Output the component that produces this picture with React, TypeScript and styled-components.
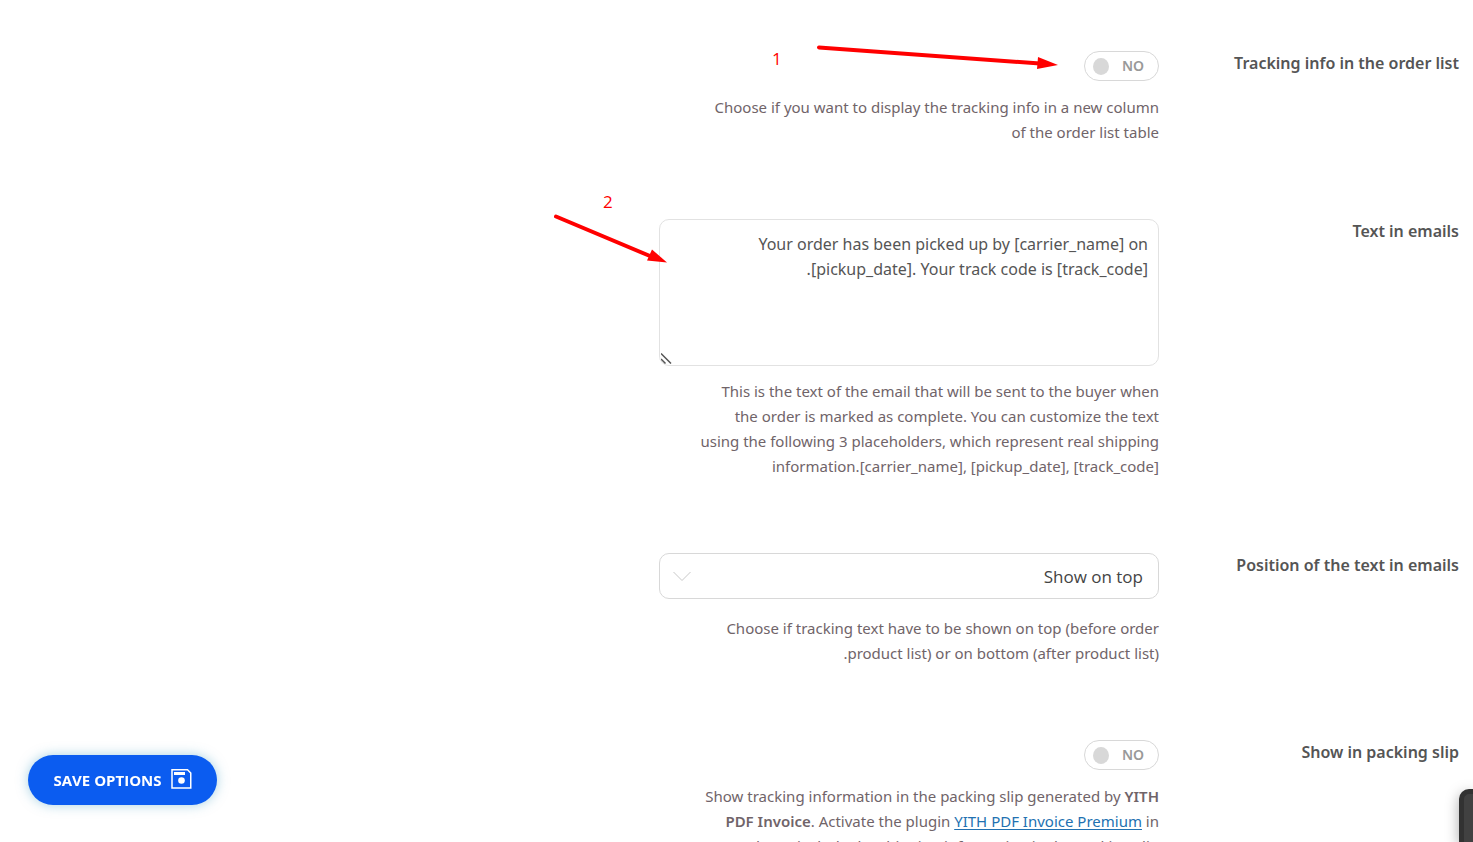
import React, { useState } from "react";
import styled, { createGlobalStyle } from "styled-components";

const GlobalStyle = createGlobalStyle`
  * { box-sizing: border-box; }
  body {
    margin: 0;
    background: #fff;
    color: #555;
    font-family: "Noto Sans", "Open Sans", sans-serif;
    font-size: 16px;
  }
`;

const Page = styled.main`
  position: relative;
  height: 100vh;
  overflow: hidden;
  padding: 51px 14px 0;
  display: flex;
  flex-direction: column;
  gap: 74px;
`;

const Row = styled.section`
  display: grid;
  grid-template-columns: 300px minmax(0, 500px);
  flex: none;
`;

const Label = styled.label`
  font-weight: 600;
  line-height: 24px;
  color: #555;
`;

const Field = styled.div`
  display: flex;
  flex-direction: column;
  align-items: flex-start;
`;

const Description = styled.p<{ $gap: number }>`
  margin: ${(p) => p.$gap}px 0 0;
  width: 100%;
  max-width: 462px;
  font-size: 15px;
  line-height: 25px;
  color: #706469;

  strong { font-weight: 600; }
`;

const Link = styled.a`
  color: #2271b1;
  text-underline-offset: 2px;
`;

const Switch = styled.button`
  display: flex;
  align-items: center;
  justify-content: space-between;
  width: 75px;
  height: 30px;
  padding: 0 14px 0 8px;
  border: 1px solid #d8d8d8;
  border-radius: 15px;
  background: #fff;
  color: #999;
  font: 600 14px/20px "Noto Sans", sans-serif;
  cursor: pointer;
`;

const Knob = styled.span`
  width: 16px;
  height: 17px;
  border-radius: 50%;
  background: #d8d8d8;
`;

const ControlBox = styled.div`
  position: relative;
  width: 100%;
`;

const TextArea = styled.textarea`
  display: block;
  width: 100%;
  height: 147px;
  padding: 12px 10px;
  border: 1px solid #e2e2e2;
  border-radius: 10px;
  background: #fff;
  color: #555;
  font: 400 16px/25px "Noto Sans", sans-serif;
  resize: vertical;

  &::-webkit-resizer { background: transparent; }
`;

const Grip = styled.svg`
  position: absolute;
  left: 2px;
  bottom: 2px;
  pointer-events: none;
`;

const Select = styled.select`
  display: block;
  appearance: none;
  width: 100%;
  height: 46px;
  padding: 0 15px;
  border: 1px solid #d8d8d8;
  border-radius: 10px;
  background: #fff;
  color: #444;
  font: 400 17px/25px "Open Sans", sans-serif;
`;

const Chevron = styled.svg`
  position: absolute;
  left: 14px;
  top: 18px;
  pointer-events: none;
`;

const SaveButton = styled.button`
  position: fixed;
  left: 28px;
  bottom: 37px;
  display: flex;
  align-items: center;
  justify-content: center;
  gap: 9px;
  width: 189px;
  height: 50px;
  border: 0;
  border-radius: 25px;
  background: #0b5cf0;
  box-shadow: 0 0 12px rgba(80, 165, 200, 0.5);
  color: #fff;
  font: 700 15px/20px "Open Sans", sans-serif;
  white-space: nowrap;
`;

const SidePanel = styled.aside`
  position: fixed;
  right: 0;
  bottom: 0;
  width: 14px;
  height: 53px;
  border: 5px solid #323232;
  border-width: 5px 0 0 5px;
  border-radius: 10px 0 0 0;
  background: #414141;
  box-shadow: 0 4px 14px rgba(0, 0, 0, 0.35);
`;

const Annotations = styled.svg`
  position: absolute;
  top: 0;
  right: 373px;
  pointer-events: none;
`;

const Callout = styled.text`
  fill: #f00;
  font: 400 17px "Open Sans", sans-serif;
`;

function Toggle({ id }: { id: string }) {
  const [on, setOn] = useState(false);
  return (
    <Switch id={id} type="button" role="switch" aria-checked={on} dir="ltr" onClick={() => setOn(!on)}>
      <Knob />
      {on ? "YES" : "NO"}
    </Switch>
  );
}

export default function App() {
  return (
    <>
      <GlobalStyle />
      <Page dir="rtl">
        <Row>
          <Label htmlFor="order-list">Tracking info in the order list</Label>
          <Field>
            <Toggle id="order-list" />
            <Description $gap={14}>
              Choose if you want to display the tracking info in a new column of the order list table
            </Description>
          </Field>
        </Row>
        <Row>
          <Label htmlFor="email-text">Text in emails</Label>
          <Field>
            <ControlBox>
              <TextArea
                id="email-text"
                spellCheck={false}
                defaultValue="Your order has been picked up by [carrier_name] on [pickup_date]. Your track code is [track_code]."
              />
              <Grip width="11" height="11" viewBox="0 0 11 11" stroke="#555" strokeWidth="1.500">
                <path d="M0 .5 10 10.500M0 6 4.500 10.500" />
              </Grip>
            </ControlBox>
            <Description $gap={13}>
              This is the text of the email that will be sent to the buyer when the order is marked as
              complete. You can customize the text using the following 3 placeholders, which represent
              real shipping information.[carrier_name], [pickup_date], [track_code]
            </Description>
          </Field>
        </Row>
        <Row>
          <Label htmlFor="email-position">Position of the text in emails</Label>
          <Field>
            <ControlBox>
              <Select id="email-position">
                <option>Show on top</option>
                <option>Show on bottom</option>
              </Select>
              <Chevron width="18" height="11" viewBox="0 0 18 11" fill="none" stroke="#c8c8c8">
                <path d="M.5 1 9 9.5 17.5 1" />
              </Chevron>
            </ControlBox>
            <Description $gap={17}>
              Choose if tracking text have to be shown on top (before order product list) or on bottom
              (after product list).
            </Description>
          </Field>
        </Row>
        <Row>
          <Label htmlFor="packing-slip">Show in packing slip</Label>
          <Field>
            <Toggle id="packing-slip" />
            <Description $gap={14}>
              Show tracking information in the packing slip generated by <strong>YITH PDF Invoice</strong>.
              Activate the plugin <Link href="#">YITH PDF Invoice Premium</Link> in order to include the
              shipping information in the packing slip
            </Description>
          </Field>
        </Row>
        <Annotations width="550" height="280" viewBox="550 0 550 280" direction="ltr">
          <g stroke="#f00" strokeWidth="4" strokeLinecap="round">
            <path d="M819 47.500 1040 63.500" />
            <path d="M556 216.500 650 256" />
          </g>
          <g fill="#f00">
            <path d="M1038 57 1058 65 1037 69Z" />
            <path d="M652 249.500 667 262.500 647 260.500Z" />
          </g>
          <Callout x="772" y="65">1</Callout>
          <Callout x="603" y="208">2</Callout>
        </Annotations>
      </Page>
      <SaveButton type="button">
        SAVE OPTIONS
        <svg width="21" height="23" viewBox="0 0 21 23" fill="none" stroke="#fff" aria-hidden="true">
          <path d="M1 .75H16.500L19.750 4V19H1Z" strokeWidth="1.500" />
          <path d="M3 3H14V6H3Z" fill="#fff" stroke="none" />
          <circle cx="10.500" cy="11.500" r="3.300" fill="#fff" stroke="none" />
        </svg>
      </SaveButton>
      <SidePanel />
    </>
  );
}
